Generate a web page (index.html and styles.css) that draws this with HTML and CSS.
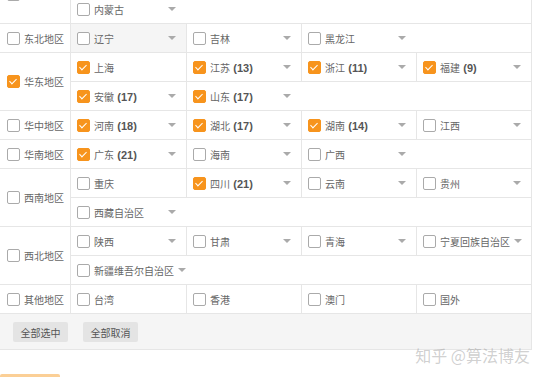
FILE: index.html
```html
<!DOCTYPE html>
<html lang="zh-CN">
<head>
    <meta charset="UTF-8">
    <title>选择地区</title>
    <link rel="stylesheet" href="styles.css">
</head>
<body>
    <div class="area-table">
        <div class="region">
            <label class="region-name"><span class="cb"></span>华北地区</label>
            <div class="provinces">
                <div class="prov-row">
                    <div class="cell"><span class="cb"></span><span class="name">北京</span></div>
                    <div class="cell"><span class="cb"></span><span class="name">天津</span></div>
                    <div class="cell"><span class="cb"></span><span class="name">河北</span><i class="caret"></i></div>
                    <div class="cell"><span class="cb"></span><span class="name">山西</span><i class="caret"></i></div>
                </div>
                <div class="prov-row">
                    <div class="cell"><span class="cb"></span><span class="name">内蒙古</span><i class="caret"></i></div>
                </div>
            </div>
        </div>
        <div class="region">
            <label class="region-name"><span class="cb"></span>东北地区</label>
            <div class="provinces">
                <div class="prov-row">
                    <div class="cell hover"><span class="cb"></span><span class="name">辽宁</span><i class="caret"></i></div>
                    <div class="cell"><span class="cb"></span><span class="name">吉林</span><i class="caret"></i></div>
                    <div class="cell"><span class="cb"></span><span class="name">黑龙江</span><i class="caret"></i></div>
                </div>
            </div>
        </div>
        <div class="region">
            <label class="region-name"><span class="cb on"></span>华东地区</label>
            <div class="provinces">
                <div class="prov-row">
                    <div class="cell"><span class="cb on"></span><span class="name">上海</span></div>
                    <div class="cell"><span class="cb on"></span><span class="name">江苏 <b>(13)</b></span><i class="caret"></i></div>
                    <div class="cell"><span class="cb on"></span><span class="name">浙江 <b>(11)</b></span><i class="caret"></i></div>
                    <div class="cell"><span class="cb on"></span><span class="name">福建 <b>(9)</b></span><i class="caret"></i></div>
                </div>
                <div class="prov-row">
                    <div class="cell"><span class="cb on"></span><span class="name">安徽 <b>(17)</b></span><i class="caret"></i></div>
                    <div class="cell"><span class="cb on"></span><span class="name">山东 <b>(17)</b></span><i class="caret"></i></div>
                </div>
            </div>
        </div>
        <div class="region">
            <label class="region-name"><span class="cb"></span>华中地区</label>
            <div class="provinces">
                <div class="prov-row">
                    <div class="cell"><span class="cb on"></span><span class="name">河南 <b>(18)</b></span><i class="caret"></i></div>
                    <div class="cell"><span class="cb on"></span><span class="name">湖北 <b>(17)</b></span><i class="caret"></i></div>
                    <div class="cell"><span class="cb on"></span><span class="name">湖南 <b>(14)</b></span><i class="caret"></i></div>
                    <div class="cell"><span class="cb"></span><span class="name">江西</span><i class="caret"></i></div>
                </div>
            </div>
        </div>
        <div class="region">
            <label class="region-name"><span class="cb"></span>华南地区</label>
            <div class="provinces">
                <div class="prov-row">
                    <div class="cell"><span class="cb on"></span><span class="name">广东 <b>(21)</b></span><i class="caret"></i></div>
                    <div class="cell"><span class="cb"></span><span class="name">海南</span><i class="caret"></i></div>
                    <div class="cell"><span class="cb"></span><span class="name">广西</span><i class="caret"></i></div>
                </div>
            </div>
        </div>
        <div class="region">
            <label class="region-name"><span class="cb"></span>西南地区</label>
            <div class="provinces">
                <div class="prov-row">
                    <div class="cell"><span class="cb"></span><span class="name">重庆</span></div>
                    <div class="cell"><span class="cb on"></span><span class="name">四川 <b>(21)</b></span><i class="caret"></i></div>
                    <div class="cell"><span class="cb"></span><span class="name">云南</span><i class="caret"></i></div>
                    <div class="cell"><span class="cb"></span><span class="name">贵州</span><i class="caret"></i></div>
                </div>
                <div class="prov-row">
                    <div class="cell"><span class="cb"></span><span class="name">西藏自治区</span><i class="caret"></i></div>
                </div>
            </div>
        </div>
        <div class="region">
            <label class="region-name"><span class="cb"></span>西北地区</label>
            <div class="provinces">
                <div class="prov-row">
                    <div class="cell"><span class="cb"></span><span class="name">陕西</span><i class="caret"></i></div>
                    <div class="cell"><span class="cb"></span><span class="name">甘肃</span><i class="caret"></i></div>
                    <div class="cell"><span class="cb"></span><span class="name">青海</span><i class="caret"></i></div>
                    <div class="cell"><span class="cb"></span><span class="name">宁夏回族自治区</span><i class="caret"></i></div>
                </div>
                <div class="prov-row">
                    <div class="cell"><span class="cb"></span><span class="name">新疆维吾尔自治区</span><i class="caret"></i></div>
                </div>
            </div>
        </div>
        <div class="region">
            <label class="region-name"><span class="cb"></span>其他地区</label>
            <div class="provinces">
                <div class="prov-row">
                    <div class="cell"><span class="cb"></span><span class="name">台湾</span></div>
                    <div class="cell"><span class="cb"></span><span class="name">香港</span></div>
                    <div class="cell"><span class="cb"></span><span class="name">澳门</span></div>
                    <div class="cell"><span class="cb"></span><span class="name">国外</span></div>
                </div>
            </div>
        </div>
        <div class="table-footer">
            <button class="btn">全部选中</button>
            <button class="btn">全部取消</button>
        </div>
    </div>
    <button class="save-btn">保存</button>
    <div class="watermark">知乎 @算法博友</div>
</body>
</html>
```

FILE: styles.css
```css
html, body {
    margin: 0;
    padding: 0;
    overflow: hidden;
}

body {
    position: relative;
    height: 377px;
    font-family: "Noto Sans CJK SC", "Liberation Sans", sans-serif;
    font-size: 10px;
    color: #666;
    background-color: #fff;
}

.area-table {
    width: 532px;
    margin-top: -34px;
    border-right: 1px solid #e6e6e6;
    box-sizing: border-box;
}

.region {
    display: flex;
    border-bottom: 1px solid #e6e6e6;
}

.region-name {
    width: 71px;
    flex-shrink: 0;
    box-sizing: border-box;
    border-right: 1px solid #e6e6e6;
    display: flex;
    align-items: center;
    padding-left: 7px;
}

.provinces {
    flex: 1;
}

.prov-row {
    display: grid;
    grid-template-columns: repeat(4, minmax(0, 1fr));
    height: 28px;
}

.prov-row + .prov-row {
    border-top: 1px solid #e6e6e6;
}

.cell {
    display: flex;
    align-items: center;
    padding: 0 10px 0 6px;
    white-space: nowrap;
}

.cell + .cell {
    border-left: 1px solid #e6e6e6;
}

.cell.hover {
    background-color: #f5f5f5;
}

.cb {
    position: relative;
    width: 13px;
    height: 13px;
    flex-shrink: 0;
    box-sizing: border-box;
    border: 1px solid #aaa;
    border-radius: 2px;
    background-color: #fff;
    margin-right: 4px;
}

.cb.on {
    background-color: #f7941d;
    border-color: #f7941d;
}

.cb.on::after {
    content: "";
    position: absolute;
    left: 3px;
    top: 1px;
    width: 3px;
    height: 6px;
    border: solid #fff;
    border-width: 0 1.5px 1.5px 0;
    transform: rotate(45deg);
}

.name {
    margin-right: 4px;
}

.name b {
    font-family: "Liberation Sans", Arial, sans-serif;
    font-size: 11px;
    color: #555;
    margin-left: 1px;
}

.caret {
    margin-left: auto;
    width: 0;
    height: 0;
    border-left: 4px solid transparent;
    border-right: 4px solid transparent;
    border-top: 4px solid #aaa;
}

.table-footer {
    display: flex;
    gap: 15px;
    padding: 8px 13px 7px;
    background-color: #f5f5f5;
    border-bottom: 1px solid #e6e6e6;
}

.btn {
    width: 55px;
    height: 20px;
    border: none;
    border-radius: 2px;
    background-color: #e4e4e4;
    color: #555;
    font-family: "Noto Sans CJK SC", sans-serif;
    font-size: 10px;
    padding: 0;
}

.save-btn {
    display: block;
    margin-top: 24px;
    width: 60px;
    height: 28px;
    border: none;
    border-radius: 2px;
    background-color: #fbcf96;
}

.watermark {
    position: absolute;
    right: 15px;
    top: 343px;
    font-family: "Noto Sans CJK SC", sans-serif;
    font-size: 16px;
    color: rgba(150, 150, 150, 0.45);
}
```
